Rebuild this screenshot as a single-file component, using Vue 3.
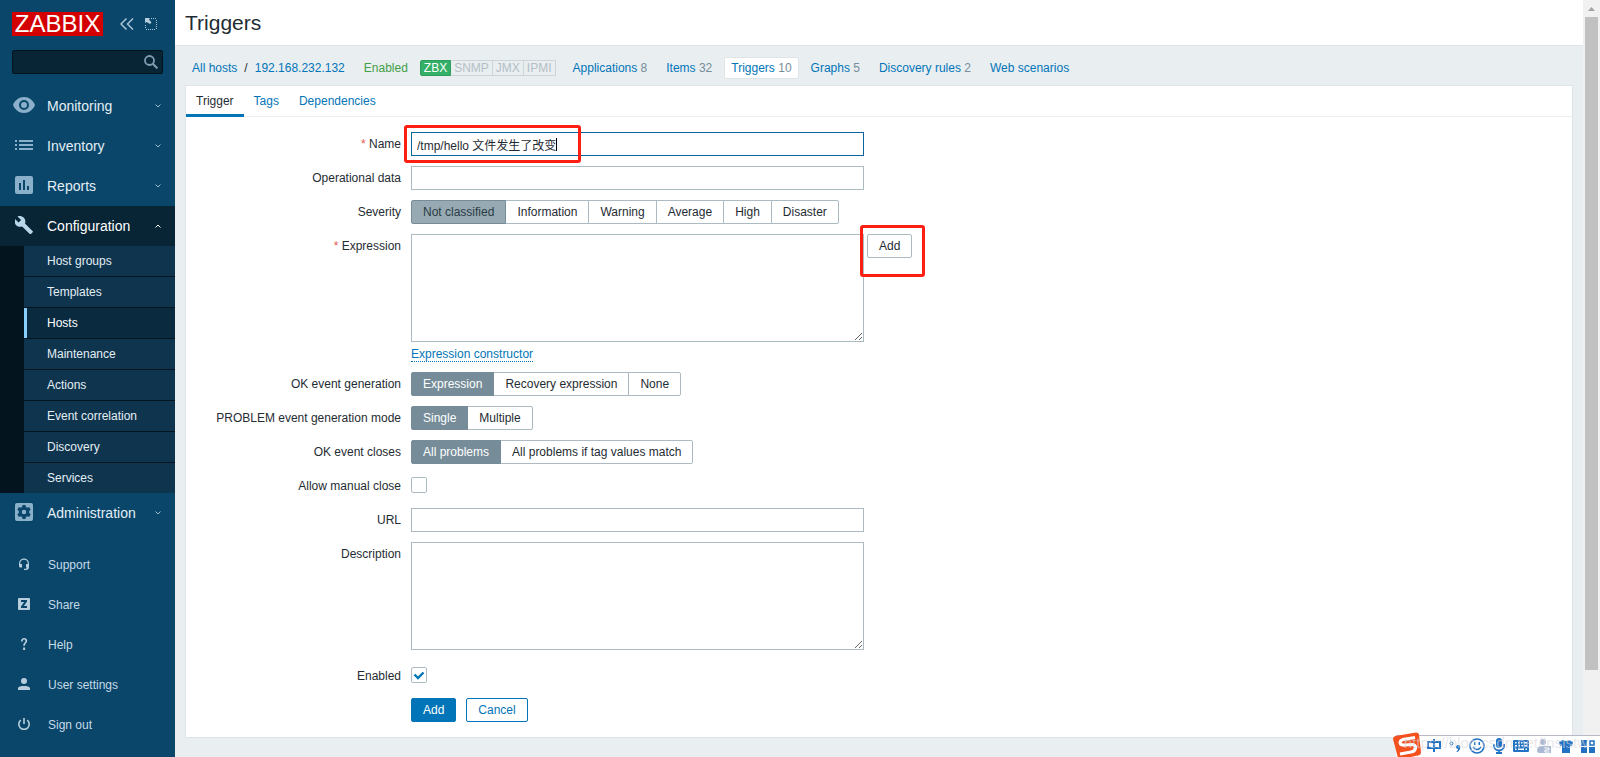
<script setup>
import { ref } from 'vue'

const mainMenu = [
  { label: 'Monitoring', w: 22, h: 16, d: 'M11 0C6 0 1.8 3.300 0 8c1.800 4.700 6 8 11 8s9.200-3.300 11-8C20.200 3.300 16 0 11 0zM11 13a5 5 0 1 1 0-10a5 5 0 0 1 0 10zM11 5a3 3 0 1 0 0 6a3 3 0 0 0 0-6z' },
  { label: 'Inventory', w: 18, h: 12, d: 'M0 1h2v2H0zM4 1h14v2H4zM0 5h2v2H0zM4 5h14v2H4zM0 9h2v2H0zM4 9h14v2H4z' },
  { label: 'Reports', w: 18, h: 18, d: 'M2 0h14a2 2 0 0 1 2 2v14a2 2 0 0 1-2 2H2a2 2 0 0 1-2-2V2a2 2 0 0 1 2-2zM4 7v7h2V7zM8 4v10h2V4zM12 10v4h2v-4z' },
  { label: 'Configuration', w: 18, h: 18, open: true, d: 'M17.700 15.200L10 7.500C10.800 5.500 10.300 3.200 8.700 1.600C7 0 4.500-.4 2.500.5L6.100 4.100L3.600 6.600L0 3C-.9 5 -.5 7.500 1.200 9.200C2.800 10.800 5.100 11.200 7.100 10.500L14.800 18c.3.4.9.4 1.200 0l1.700-1.700c.4-.3.4-.8 0-1.100z' },
  { label: 'Administration', w: 18, h: 18, d: 'M2 0h14a2 2 0 0 1 2 2v14a2 2 0 0 1-2 2H2a2 2 0 0 1-2-2V2a2 2 0 0 1 2-2zM7.500 2l-.4 2-1.300.7-1.900-.7-1.600 2.700 1.500 1.300v2l-1.500 1.300 1.600 2.700 1.900-.7 1.300.7.400 2h3l.4-2 1.300-.7 1.900.7 1.600-2.700-1.500-1.300V8l1.500-1.300L14.100 4l-1.900.7-1.300-.7-.4-2zM9 6.700a2.300 2.300 0 1 1 0 4.600a2.300 2.300 0 0 1 0-4.600z' }
]
const subMenu = ['Host groups', 'Templates', 'Hosts', 'Maintenance', 'Actions', 'Event correlation', 'Discovery', 'Services']
const footMenu = [
  { label: 'Support', d: 'M1 5.500a5 5 0 0 1 10 0V9A3 3 0 0 1 8 12H6v-1.200h2L9 9.500H8V6h1.800V5.500a3.800 3.800 0 0 0-7.600 0V6H4v3.500H2.500A1.500 1.500 0 0 1 1 8z' },
  { label: 'Share', d: 'M1 0h10a1 1 0 0 1 1 1v10a1 1 0 0 1-1 1H1a1 1 0 0 1-1-1V1a1 1 0 0 1 1-1zM3 2v2h3.200L3 8.500V10h6V8H5.800L9 3.500V2z' },
  { label: 'Help', d: 'M3 3.500C3 1.200 4.200 0 6.100 0C8 0 9.200 1.100 9.200 2.800c0 2.400-2.300 2.600-2.300 5H5.200c0-3 2.200-3.200 2.200-4.900c0-.8-.5-1.400-1.300-1.400c-.9 0-1.400.7-1.400 2zM5.100 9.500h2V12h-2z' },
  { label: 'User settings', d: 'M6 0a3 3 0 1 1 0 6a3 3 0 0 1 0-6zM0 12v-1.500C0 8.500 3.500 8 6 8s6 .5 6 2.500V12z' },
  { label: 'Sign out', d: 'M5.200 0h1.600v6H5.200zM2.200 1.500l1.100 1.200a4.400 4.400 0 1 0 5.400 0l1.100-1.200a6 6 0 1 1-7.600 0z' }
]
const hostLinks = [
  { label: 'Applications', count: 8 },
  { label: 'Items', count: 32 },
  { label: 'Triggers', count: 10, current: true },
  { label: 'Graphs', count: 5 },
  { label: 'Discovery rules', count: 2 },
  { label: 'Web scenarios' }
]
const severities = ['Not classified', 'Information', 'Warning', 'Average', 'High', 'Disaster']
const okEvents = ['Expression', 'Recovery expression', 'None']
const modes = ['Single', 'Multiple']
const closes = ['All problems', 'All problems if tag values match']

const name = ref('/tmp/hello 文件发生了改变')
const severity = ref('Not classified')
const okEvent = ref('Expression')
const mode = ref('Single')
const close = ref('All problems')
const enabled = ref(true)
const manual = ref(false)
</script>

<template>
  <div class="page">
    <aside class="sidebar">
      <div class="brand">
        <a href="#" class="logo">ZABBIX</a>
        <button type="button" class="icon-btn collapse" aria-label="Collapse sidebar">
          <svg width="14" height="12" viewBox="0 0 14 12"><path d="M6.500 .5L1 6l5.500 5.500M13 .5L7.500 6l5.500 5.500" fill="none" stroke="#a9c4d6" stroke-width="1.500" /></svg>
        </button>
        <button type="button" class="icon-btn" aria-label="Hide sidebar">
          <svg width="12" height="12" viewBox="0 0 12 12"><path d="M0 0h5L4 1.500L6.500 4.500L5 6L1.500 4L0 5z" fill="#b5cddd" /><path d="M6 .5h6M11.500 2v10M10 11.500H0M.5 10V6" fill="none" stroke="#a9c4d6" stroke-dasharray="1 1" /></svg>
        </button>
      </div>
      <div class="search">
        <input type="text" aria-label="Search">
        <button type="button" aria-label="Search">
          <svg width="14" height="14" viewBox="0 0 14 14"><circle cx="5.500" cy="5.500" r="4.500" fill="none" stroke="#7f9db2" stroke-width="1.800" /><path d="M8.800 8.800l4.600 4.600" stroke="#7f9db2" stroke-width="2" /></svg>
        </button>
      </div>
      <nav>
        <template v-for="m in mainMenu" :key="m.label">
          <a href="#" class="menu-item" :class="{ open: m.open }">
            <span class="menu-icon"><svg :width="m.w" :height="m.h" :viewBox="`0 0 ${m.w} ${m.h}`"><path :d="m.d" fill-rule="evenodd" /></svg></span>
            <span class="menu-label">{{ m.label }}</span>
            <svg class="chevron" width="6" height="4" viewBox="0 0 6 4"><path :d="m.open ? 'M.5 3.500L3 1l2.500 2.500' : 'M.5 .5L3 3L5.500 .5'" /></svg>
          </a>
          <ul v-if="m.open" class="submenu">
            <li v-for="s in subMenu" :key="s"><a href="#" :class="{ active: s === 'Hosts' }">{{ s }}</a></li>
          </ul>
        </template>
      </nav>
      <nav class="foot">
        <a v-for="f in footMenu" :key="f.label" href="#">
          <svg width="12" height="12" viewBox="0 0 12 12"><path :d="f.d" fill-rule="evenodd" /></svg>
          <span>{{ f.label }}</span>
        </a>
      </nav>
    </aside>

    <main class="main">
      <header class="title"><h1>Triggers</h1></header>
      <div class="crumbs">
        <div class="path"><a href="#">All hosts</a><span>/</span><a href="#">192.168.232.132</a></div>
        <span class="status">Enabled</span>
        <div class="badges"><span class="on">ZBX</span><span>SNMP</span><span>JMX</span><span>IPMI</span></div>
        <nav class="host-links">
          <a v-for="l in hostLinks" :key="l.label" href="#" :class="{ current: l.current }">{{ l.label }}<span v-if="l.count">{{ ' ' + l.count }}</span></a>
        </nav>
      </div>

      <section class="panel">
        <div class="tabs">
          <a href="#" class="current">Trigger</a><a href="#">Tags</a><a href="#">Dependencies</a>
        </div>
        <form class="form" @submit.prevent>
          <label for="name"><i>*</i> Name</label>
          <div class="field">
            <input id="name" v-model="name" type="text" class="text focused">
            <span class="caret"></span>
            <span class="mark mark-name"></span>
          </div>

          <label for="opdata">Operational data</label>
          <div class="field"><input id="opdata" type="text" class="text"></div>

          <span class="lab">Severity</span>
          <div class="seg severity" role="radiogroup" aria-label="Severity">
            <label v-for="s in severities" :key="s" :class="{ sel: severity === s }"><input v-model="severity" type="radio" name="severity" :value="s">{{ s }}</label>
          </div>

          <label for="expr"><i>*</i> Expression</label>
          <div class="field">
            <div class="expr-row">
              <textarea id="expr"></textarea>
              <span class="add-wrap"><button type="button" class="btn grey">Add</button><span class="mark mark-add"></span></span>
            </div>
            <a href="#" class="dotted">Expression constructor</a>
          </div>

          <span class="lab">OK event generation</span>
          <div class="seg" role="radiogroup" aria-label="OK event generation">
            <label v-for="s in okEvents" :key="s" :class="{ sel: okEvent === s }"><input v-model="okEvent" type="radio" name="ok" :value="s">{{ s }}</label>
          </div>

          <span class="lab">PROBLEM event generation mode</span>
          <div class="seg" role="radiogroup" aria-label="PROBLEM event generation mode">
            <label v-for="s in modes" :key="s" :class="{ sel: mode === s }"><input v-model="mode" type="radio" name="mode" :value="s">{{ s }}</label>
          </div>

          <span class="lab">OK event closes</span>
          <div class="seg" role="radiogroup" aria-label="OK event closes">
            <label v-for="s in closes" :key="s" :class="{ sel: close === s }"><input v-model="close" type="radio" name="close" :value="s">{{ s }}</label>
          </div>

          <label for="manual">Allow manual close</label>
          <div class="check"><input id="manual" v-model="manual" type="checkbox"></div>

          <label for="url">URL</label>
          <div class="field"><input id="url" type="text" class="text"></div>

          <label for="desc">Description</label>
          <div class="field desc"><textarea id="desc"></textarea></div>

          <label for="enabled">Enabled</label>
          <div class="check">
            <input id="enabled" v-model="enabled" type="checkbox">
            <svg v-if="enabled" class="tick" width="16" height="16" viewBox="0 0 16 16"><path d="M3.500 7.500L7 11l5.500-5.500" fill="none" stroke="#0275b8" stroke-width="2.400" /></svg>
          </div>

          <span></span>
          <div class="actions"><button type="submit" class="btn primary">Add</button><button type="button" class="btn">Cancel</button></div>
        </form>
      </section>
    </main>

    <div class="scrollbar" aria-hidden="true">
      <svg width="7" height="4" viewBox="0 0 7 4"><path d="M0 4L3.500 0L7 4z" fill="#a3a3a3" /></svg>
      <div class="thumb"></div>
    </div>

    <div class="ime">
      <svg class="sogou" width="28" height="27" viewBox="0 0 28 27"><path d="M2.500 4L23 0.500q2.500 0 3 2L28 20q0 3-3 3.500L8 27q-3 0-3.500-3L0 7q0-2.500 2.500-3z" fill="#f4511e" /><path d="M22 5.500L10 7.500Q6 9 7.500 12q1 1.500 5 1l6-.5q4.500 0 4 3.500t-4.500 4L7 22" fill="none" stroke="#fff" stroke-width="3.200" /></svg>
      <svg width="14" height="16" viewBox="0 0 14 16"><path d="M1 4h12v6H1zM7 1v13" fill="none" stroke="#2272c3" stroke-width="2" /></svg>
      <svg width="12" height="14" viewBox="0 0 12 14"><circle cx="2.500" cy="4.500" r="1.500" fill="none" stroke="#2272c3" /><path d="M9 6a2 2 0 0 1 2.300 2.200q0 3-3.300 5l-.5-.8q1.600-1.200 1.600-2.400A2 2 0 0 1 9 6z" fill="#2272c3" /></svg>
      <svg width="16" height="16" viewBox="0 0 16 16"><circle cx="8" cy="8" r="7" fill="none" stroke="#2272c3" stroke-width="1.600" /><path d="M5 4h1.500v3H5zM9.500 4H11v3H9.500z" fill="#2272c3" /><path d="M4 9q4 5 8 0" fill="none" stroke="#2272c3" stroke-width="1.400" /></svg>
      <svg width="12" height="16" viewBox="0 0 12 16"><rect x="3" y="0" width="6" height="10" rx="3" fill="#2272c3" /><path d="M1 6v2a5 4.500 0 0 0 10 0V6M6 12v3M3 15h6" fill="none" stroke="#2272c3" stroke-width="1.800" /></svg>
      <svg width="16" height="12" viewBox="0 0 16 12"><path d="M1 0h14a1 1 0 0 1 1 1v10a1 1 0 0 1-1 1H1a1 1 0 0 1-1-1V1a1 1 0 0 1 1-1zM2 2v1.500h1.500V2zM5 2v1.500h1.500V2zM8 2v1.500h1.500V2zM11 2v1.500h3V2zM2 5v1.500h2V5zM5.500 5v1.500H7V5zM8.500 5v1.500H10V5zM11.500 5v1.500H14V5zM2 8.500V10h1.500V8.500zM5 8.500V10h6V8.500zM12.500 8.500V10H14V8.500z" fill="#2272c3" fill-rule="evenodd" /></svg>
      <svg width="14" height="16" viewBox="0 0 14 16"><circle cx="6" cy="4" r="3" fill="#aab9d3" /><path d="M0 13q0-5 5-5h9v7H4q-4 0-4-2z" fill="#aab9d3" /><path d="M7.500 10H12v2H8v2h4.500" fill="none" stroke="#fff" /></svg>
      <svg width="14" height="14" viewBox="0 0 14 14"><path d="M4 1q3 2 6 0l4 2-1 4-2-.5V14H3V6.500L1 7 0 3z" fill="#2272c3" /></svg>
      <svg width="14" height="14" viewBox="0 0 14 14"><path d="M0 1h6v6H0zM0 8h6v6H0zM8 8h6v6H8z" fill="#2272c3" /><path d="M9 2h4v4H9z" fill="none" stroke="#2272c3" stroke-width="1.500" /></svg>
      <span class="watermark">https://blog.csdn.net/Insistw</span>
    </div>
  </div>
</template>

<style>
body { margin: 0; background: #e9eef1; }
</style>

<style scoped>
* { box-sizing: border-box; }
.page { display: flex; min-height: 100vh; position: relative; overflow: hidden; background: #e9eef1; color: #1f2c33; font: 12px/16px "Liberation Sans", Arial, "Noto Sans CJK SC", sans-serif; }
a { color: #0275b8; text-decoration: none; }
button, input, textarea { font: inherit; color: inherit; margin: 0; }
svg { display: block; flex: none; }

.sidebar { flex: none; width: 175px; background: #0a466a; }
.brand { display: flex; align-items: center; padding: 12px 12px 0; }
.logo { width: 91px; height: 24px; background: #d40000; color: #fff; font-size: 24px; line-height: 24px; text-align: center; }
.icon-btn { border: 0; padding: 0; background: none; margin-left: 11px; }
.collapse { margin-left: 17px; }
.search { display: flex; align-items: center; margin: 14px 12px 12px; height: 24px; border: 1px solid #03121c; border-radius: 2px; background: #082536; padding-right: 4px; }
.search input { flex: 1; min-width: 0; border: 0; background: none; outline: 0; color: #fff; }
.search button { border: 0; padding: 0; background: none; }
.menu-item { display: flex; align-items: center; height: 40px; padding-right: 14px; color: #e3eef5; font-size: 14px; }
.menu-icon { width: 47px; display: flex; justify-content: center; padding-bottom: 2px; fill: #8bb0ca; }
.menu-label { flex: 1; }
.chevron path { fill: none; stroke: #9dbccf; stroke-width: 1px; }
.open { background: #082536; color: #fff; }
.open .menu-icon { fill: #b8d6ea; }
.open .chevron path { stroke: #fff; }
.submenu { list-style: none; margin: 0; padding: 0 0 0 24px; background: #04141e; }
.submenu li + li { border-top: 1px solid #05151f; }
.submenu a { display: block; height: 30px; line-height: 30px; padding-left: 20px; border-left: 3px solid #0f344d; background: #0f344d; color: #e3eef5; }
.submenu a.active { background: #0a2b3f; border-left-color: #87cefa; color: #fff; }
.foot { padding-top: 12px; }
.foot a { display: flex; align-items: center; height: 40px; padding-left: 18px; gap: 18px; color: #c6dbe7; }
.foot svg { fill: #b7cfdc; margin-bottom: 2px; }

.main { flex: 1; min-width: 0; }
.title { height: 46px; background: #fff; border-bottom: 1px solid #dfe4e7; padding: 0 10px; }
h1 { margin: 0; font-size: 21px; line-height: 46px; font-weight: 400; }
.crumbs { display: flex; align-items: center; height: 39px; padding: 4px 17px 0; white-space: nowrap; }
.path { display: flex; gap: 7px; }
.status { color: #429e47; margin: 0 12px 0 19px; }
.badges { display: flex; border-radius: 2px; }
.badges span { height: 16px; line-height: 15px; padding: 0 3px; border: 1px solid #ccd5d9; border-left-width: 0; color: #b4bfc5; }
.badges .on { background: #34af67; border: 1px solid #2f9f5e; color: #fff; border-radius: 2px 0 0 2px; }
.host-links { display: flex; gap: 5px; margin-left: 10px; }
.host-links a { padding: 2px 6px; border: 1px solid transparent; border-radius: 2px; white-space: pre; }
.host-links a span { color: #768d99; }
.host-links .current { background: #fff; border-color: #dfe4e7; }

.panel { margin: 0 10px 20px; background: #fff; border: 1px solid #dfe4e7; }
.tabs { display: flex; height: 31px; border-bottom: 1px solid #ebeef0; }
.tabs a { height: 31px; line-height: 30px; padding: 0 10px; }
.tabs .current { color: #1f2c33; border-bottom: 3px solid #0275b8; }
.form { display: grid; grid-template-columns: 215px minmax(0, 1fr); column-gap: 10px; row-gap: 10px; padding: 15px 0 14px; }
.form > label, .lab { text-align: right; line-height: 24px; }
.form i { font-style: normal; color: #e45959; }
.field { position: relative; }
.text, textarea { display: block; width: 453px; border: 1px solid #acbbc2; border-radius: 0; background: #fff; padding: 0 5px; outline: 0; }
.text { height: 24px; }
.focused { border-color: #0a66a0; }
.caret { position: absolute; left: 145px; top: 6px; width: 1px; height: 13px; background: #000; }
textarea { height: 108px; padding: 4px 5px; resize: both; }
.desc { padding-bottom: 4px; }
.expr-row { display: flex; gap: 3px; align-items: flex-start; }
.dotted { display: inline-block; line-height: 14px; margin-top: 5px; border-bottom: 1px dotted #0275b8; vertical-align: top; }
.add-wrap { position: relative; }
.mark { position: absolute; border: 3px solid #ff1f12; border-radius: 3px; pointer-events: none; }
.mark-name { left: -7px; top: -7px; width: 177px; height: 38px; }
.mark-add { left: -7px; top: -9px; width: 65px; height: 52px; }
.btn { display: block; height: 24px; line-height: 22px; padding: 0 11px; border: 1px solid #0275b8; border-radius: 2px; background: #fff; color: #0275b8; }
.grey { border-color: #acbbc2; color: #1f2c33; }
.primary { background: #0275b8; color: #fff; }
.seg { display: flex; }
.seg label { position: relative; height: 24px; line-height: 22px; padding: 0 11px; border: 1px solid #acbbc2; margin-right: -1px; white-space: nowrap; }
.seg label:first-child { border-radius: 2px 0 0 2px; }
.seg label:last-child { border-radius: 0 2px 2px 0; }
.seg input { position: absolute; opacity: 0; inset: 0; }
.seg .sel { background: #768d99; border-color: #768d99; color: #fff; z-index: 1; }
.severity .sel { background: #97aab3; color: #2a3b44; }
.check { position: relative; display: flex; align-items: center; height: 24px; padding-bottom: 2px; }
.check input { appearance: none; width: 16px; height: 16px; border: 1px solid #acbbc2; border-radius: 2px; background: #fff; }
.tick { position: absolute; left: 0; top: 3px; pointer-events: none; }
.actions { display: flex; gap: 10px; padding-bottom: 1px; }

.scrollbar { flex: none; width: 17px; padding: 7px 2px 0; background: #f1f1f1; }
.scrollbar svg { margin: 0 auto 6px 3px; }
.thumb { height: calc(100vh - 104px); background: #c1c1c1; width: 13px; }

.ime { position: absolute; right: 0; bottom: 0; width: 204px; height: 23px; display: flex; align-items: center; gap: 8px; justify-content: flex-end; padding: 0 5px 2px 0; background: #fff; border-top: 1px solid #b9b9c9; }
.sogou { margin-bottom: 2px; margin-right: -2px; }
.watermark { position: absolute; right: 12px; bottom: 6px; font-size: 15px; line-height: 18px; color: rgba(215, 215, 222, 0.6); white-space: nowrap; }
</style>
